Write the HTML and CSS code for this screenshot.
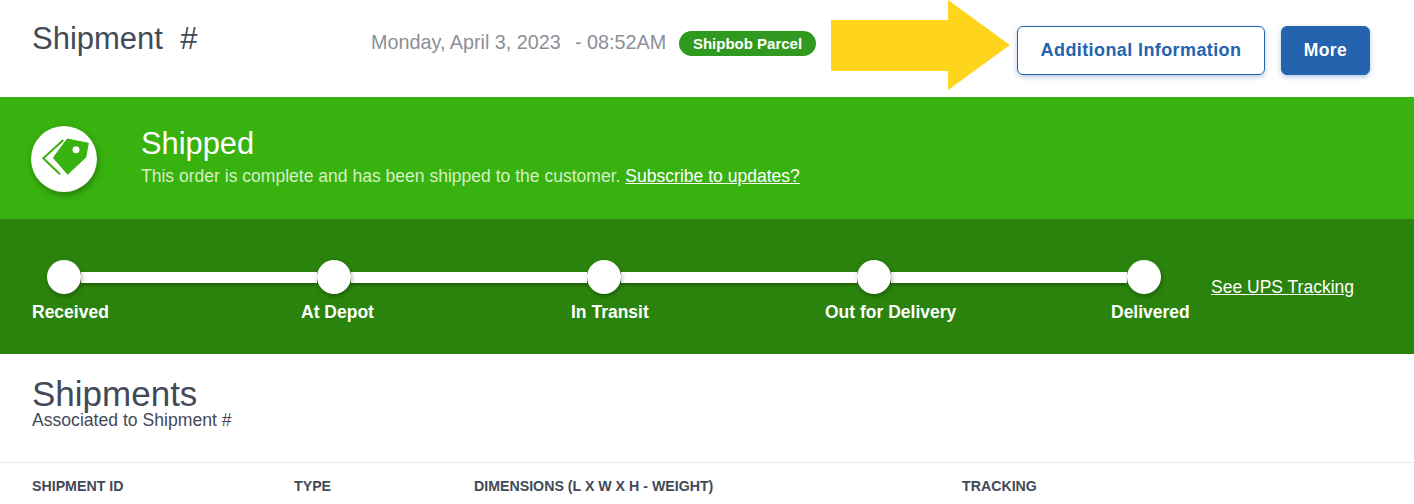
FILE: index.html
```html
<!DOCTYPE html>
<html lang="en">
<head>
  <meta charset="utf-8">
  <title>Shipment</title>
  <link rel="stylesheet" href="styles.css">
</head>
<body>
<div class="page">
  <header class="top-bar">
    <h1 class="shipment-title">Shipment &nbsp;#</h1>
    <div class="shipment-date">Monday, April 3, 2023 &nbsp;<span class="date-time">- 08:52AM</span></div>
    <span class="pill">Shipbob Parcel</span>
    <a class="btn btn-outline" href="#">Additional Information</a>
    <a class="btn btn-solid" href="#">More</a>
    <!-- annotation arrow on top of the screenshot -->
    <svg class="callout-arrow" width="180" height="90" viewBox="0 0 180 90" aria-hidden="true">
      <polygon points="0,20 117,20 117,0 179,45 117,90 117,71 0,71" fill="#fed41d"/>
    </svg>
  </header>

  <section class="status-banner">
    <div class="status-icon">
      <svg width="66" height="66" viewBox="0 0 66 66" aria-hidden="true">
        <path d="M22.3 31.7 36.3 13 57.3 17.3 54.7 31.3 36.7 48.3Z" fill="#38b20f" stroke="#38b20f" stroke-linejoin="round"/>
        <circle cx="45" cy="23.7" r="3.5" fill="#fff"/>
        <path d="M32.3 14 12.3 32.3 29 48.3" fill="none" stroke="#38b20f" stroke-width="2"/>
      </svg>
    </div>
    <div class="status-text">
      <h2>Shipped</h2>
      <p>This order is complete and has been shipped to the customer. <a href="#">Subscribe to updates?</a></p>
    </div>
  </section>

  <section class="tracker">
    <div class="tracker-steps">
      <div class="track">
        <span class="dot"></span><span class="bar"></span>
        <span class="dot"></span><span class="bar"></span>
        <span class="dot"></span><span class="bar"></span>
        <span class="dot"></span><span class="bar"></span>
        <span class="dot"></span>
      </div>
      <div class="track-labels">
        <span>Received</span>
        <span>At Depot</span>
        <span>In Transit</span>
        <span>Out for Delivery</span>
        <span>Delivered</span>
      </div>
    </div>
    <a class="tracking-link" href="#">See UPS Tracking</a>
  </section>

  <section class="shipments">
    <h2>Shipments</h2>
    <p>Associated to Shipment #</p>
  </section>

  <table class="shipments-table">
    <thead>
      <tr>
        <th class="col-id">Shipment ID</th>
        <th class="col-type">Type</th>
        <th class="col-dim">Dimensions (L x W x H - Weight)</th>
        <th>Tracking</th>
      </tr>
    </thead>
  </table>
</div>
</body>
</html>
```

FILE: styles.css
```css
body {
  margin: 0;
  background-color: white;
  font-family: "Liberation Sans", Arial, sans-serif;
  color: #434a57;
}

a {
  color: inherit;
}

.page {
  height: 504px;
  overflow: hidden;
}

/* Top bar */
.top-bar {
  position: relative;
  display: flex;
  align-items: flex-start;
  height: 97px;
  padding-left: 32px;
  box-sizing: border-box;
}

.shipment-title {
  margin: 21px 0 0 0;
  width: 339px;
  font-size: 31px;
  line-height: 36px;
  font-weight: normal;
  white-space: nowrap;
}

.shipment-date {
  margin-top: 31px;
  width: 308px;
  font-size: 19.8px;
  line-height: 22px;
  color: #8b8f97;
  white-space: nowrap;
}

.date-time {
  margin-left: 3px;
}

.pill {
  margin-top: 31px;
  width: 137px;
  height: 25px;
  line-height: 25px;
  border-radius: 13px;
  background-color: #2f9a1f;
  color: white;
  font-size: 15px;
  font-weight: bold;
  text-align: center;
}

.btn {
  margin-top: 26px;
  box-sizing: border-box;
  height: 49px;
  line-height: 47px;
  border-radius: 6px;
  font-weight: bold;
  text-align: center;
  text-decoration: none;
  letter-spacing: 0.4px;
  box-shadow: 0 2px 5px rgba(36, 99, 173, 0.35);
}

.btn-outline {
  margin-left: 201px;
  width: 248px;
  border: 1px solid #2463ad;
  background-color: white;
  color: #2463ad;
  font-size: 18px;
}

.btn-solid {
  margin-left: 16px;
  width: 89px;
  border: 1px solid #2463ad;
  background-color: #2463ad;
  color: white;
  font-size: 17.5px;
}

.callout-arrow {
  position: absolute;
  left: 831px;
  top: 0;
}

/* Status banner */
.status-banner {
  display: flex;
  align-items: flex-start;
  height: 122px;
  padding-left: 31px;
  box-sizing: border-box;
  background-color: #38b20f;
  color: white;
}

.status-icon {
  width: 66px;
  height: 66px;
  margin-top: 29px;
  border-radius: 50%;
  background-color: white;
  box-shadow: 1px 3px 6px rgba(0, 0, 0, 0.3);
}

.status-text {
  margin: 29px 0 0 44px;
}

.status-text h2 {
  margin: 0;
  font-size: 30.8px;
  line-height: 36px;
  font-weight: normal;
}

.status-text p {
  margin: 3px 0 0 0;
  font-size: 17.55px;
  line-height: 22px;
  color: #d6f0c6;
}

.status-text p a {
  color: white;
}

/* Tracker */
.tracker {
  display: flex;
  align-items: flex-start;
  height: 135px;
  padding-left: 32px;
  box-sizing: border-box;
  background-color: #2a830c;
  color: white;
}

.tracker-steps {
  width: 1179px;
}

.track {
  display: flex;
  align-items: center;
  margin-top: 41px;
  padding-left: 15px;
}

.dot {
  position: relative;
  flex: none;
  width: 34px;
  height: 34px;
  border-radius: 50%;
  background-color: white;
  box-shadow: 1px 2px 4px rgba(0, 0, 0, 0.3);
}

.bar {
  flex: none;
  width: 236px;
  height: 11px;
  background-color: white;
  box-shadow: 0 2px 3px rgba(0, 0, 0, 0.3);
}

.track-labels {
  display: grid;
  grid-template-columns: 269px 270px 254px 286px auto;
  margin-top: 7px;
  font-size: 17.5px;
  line-height: 22px;
  font-weight: bold;
  white-space: nowrap;
}

.tracking-link {
  margin-top: 57px;
  font-size: 17.5px;
  line-height: 22px;
  white-space: nowrap;
}

/* Shipments */
.shipments {
  height: 108px;
  padding: 23px 0 0 32px;
  box-sizing: border-box;
}

.shipments h2 {
  margin: 0;
  font-size: 35px;
  line-height: 34px;
  font-weight: normal;
}

.shipments p {
  margin: 0;
  font-size: 17.6px;
  line-height: 18px;
}

.shipments-table {
  width: 100%;
  table-layout: fixed;
  border-collapse: collapse;
  border-top: 1px solid #e8e8e8;
}

.shipments-table th {
  padding: 14px 0 0 0;
  font-size: 14.2px;
  line-height: 18px;
  font-weight: bold;
  text-align: left;
  text-transform: uppercase;
}

.shipments-table .col-id {
  width: 294px;
  padding-left: 32px;
  box-sizing: border-box;
}

.shipments-table .col-type {
  width: 180px;
}

.shipments-table .col-dim {
  width: 488px;
}
```
